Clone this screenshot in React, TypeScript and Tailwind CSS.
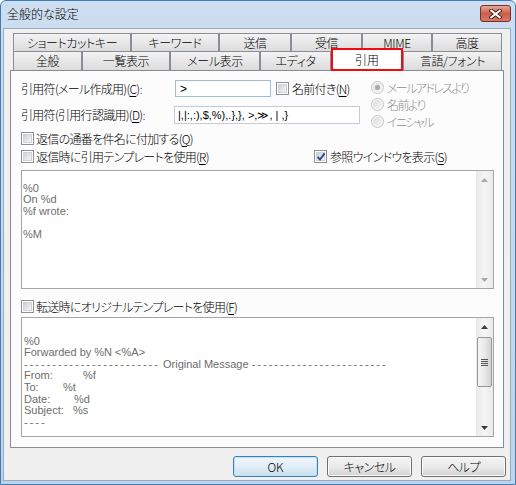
import React from "react";

const jp = "font-['Noto_Sans_CJK_JP',sans-serif] [font-feature-settings:'palt']";

function U({ children }: { children: React.ReactNode }) {
  return <span className="underline decoration-1 underline-offset-[2px]">{children}</span>;
}

function CheckBox({ checked = false }: { checked?: boolean }) {
  return (
    <span className="relative flex h-[13px] w-[13px] shrink-0 items-center justify-center border border-[#8e8f8f] bg-white">
      <span className="h-[9px] w-[9px] border border-[#d0d3d7] bg-gradient-to-br from-[#cdd1d6] to-[#f6f6f6]" />
      {checked && (
        <svg className="absolute left-[1px] top-[1px]" width="10" height="10" viewBox="0 0 10 10">
          <path d="M1.6 4.8 L4 7.6 L8.6 1.4" fill="none" stroke="#2f4787" strokeWidth="1.9" />
        </svg>
      )}
    </span>
  );
}

function Radio({ on = false }: { on?: boolean }) {
  return (
    <span className="flex h-[13px] w-[13px] shrink-0 items-center justify-center rounded-full border border-[#c4c4c4] bg-[#f8f8f8]">
      <span className="flex h-[9px] w-[9px] items-center justify-center rounded-full bg-gradient-to-br from-[#dcdcdc] to-[#f6f6f6]">
        {on && <span className="h-[5px] w-[5px] rounded-full bg-[#a8a8a8]" />}
      </span>
    </span>
  );
}

function Arrow({ up, color }: { up?: boolean; color: string }) {
  return (
    <svg width="7" height="4" viewBox="0 0 7 4">
      <polygon points={up ? "0,4 3.5,0 7,4" : "0,0 3.5,4 7,0"} fill={color} />
    </svg>
  );
}

function Dashes({ n }: { n: number }) {
  return <span className="tracking-[2px]">{"-".repeat(n)}</span>;
}

const backTabs: [string, number][] = [
  ["ショートカットキー", 118],
  ["キーワード", 88],
  ["送信", 72],
  ["受信", 71],
  ["MIME", 70],
  ["高度", 70],
];

const frontTabs: [string, number][] = [
  ["全般", 69],
  ["一覧表示", 88],
  ["メール表示", 90],
  ["エディタ", 71],
  ["引用", 72],
  ["言語/フォント", 99],
];

const tabBase =
  "flex shrink-0 items-center justify-center border border-[#8a8d94] bg-gradient-to-b from-[#f3f3f3] to-[#dcdcdc] text-[12px] leading-none tracking-[-0.4px] text-black";

const mono = "font-['Liberation_Sans',sans-serif] text-[11px] leading-[11.6px] tracking-normal text-[#6d6d6d]";

const quoteMarks = "|,|:,:),$,%),.},}, >,≫, | ,}";

const btn =
  "flex h-[21px] w-[85px] items-center justify-center rounded-[3px] border text-[12px] leading-none text-black";

export default function App() {
  return (
    <div className={`${jp} flex h-[485px] w-[516px] flex-col rounded-t-[6px] border border-[#3d7fb5] bg-gradient-to-b from-[#cddef0] to-[#bfd3ea] font-light`}>
      {/* title bar */}
      <div className="flex h-[27px] shrink-0 items-start justify-between">
        <div className="pl-[6px] pt-[7px] text-[12px] leading-none text-black">全般的な設定</div>
        <div className="mr-[4px] mt-[4px] flex h-[17px] w-[31px] items-center justify-center rounded-[3px] border border-[#7a2e25] bg-gradient-to-b from-[#e6a899] via-[#c95e4a] to-[#d87a64]">
          <svg width="13" height="10" viewBox="0 0 13 10">
            <path d="M2.2 1.6 L10.8 8.4 M10.8 1.6 L2.2 8.4" stroke="#3d1610" strokeWidth="3.8" strokeLinecap="square" />
            <path d="M2.2 1.6 L10.8 8.4 M10.8 1.6 L2.2 8.4" stroke="#ffffff" strokeWidth="2" strokeLinecap="square" />
          </svg>
        </div>
      </div>

      {/* client area */}
      <div className="ml-[2px] mr-[4px] flex h-[453px] flex-col border border-[#97abc1] bg-[#f0f0f0] pt-[4px]">
        {/* tabs */}
        <div className="ml-[9px] flex flex-col">
          <div className="flex h-[19px]">
            {backTabs.map(([label, w]) => (
              <div key={label} className={tabBase} style={{ width: w }}>
                {label}
              </div>
            ))}
          </div>
          <div className="relative -mt-px flex h-[19px] items-end">
            {frontTabs.map(([label, w]) =>
              label === "引用" ? (
                <div
                  key={label}
                  className="relative z-10 -mb-px flex h-[23px] shrink-0 items-center justify-center border-2 border-[#f00c0c] bg-white text-[12px] leading-none text-black"
                  style={{ width: w }}
                >
                  {label}
                </div>
              ) : (
                <div key={label} className={`${tabBase} h-[19px] border-b-0`} style={{ width: w }}>
                  {label}
                </div>
              )
            )}
          </div>
        </div>

        {/* panel */}
        <div className="mx-[6px] flex flex-col border border-[#898c95] bg-[#fcfcfc] pb-[10px] pl-[10px] pr-[9px] pt-[9px] text-[12px] leading-none tracking-[-0.7px] text-black">
          <div className="flex h-[51px]">
            <div className="flex w-[350px] flex-col">
              <div className="flex h-[17px] items-center">
                <span className="w-[154px] shrink-0">
                  引用符(メール作成用)(<U>C</U>):
                </span>
                <div className="flex h-[17px] w-[96px] items-center border border-[#9fbcd9] bg-white pl-[4px] font-['Liberation_Sans',sans-serif] text-[12px]">
                  &gt;
                </div>
                <span className="ml-[5px] flex items-center gap-[3px]">
                  <CheckBox />
                  <span>
                    名前付き(<U>N</U>)
                  </span>
                </span>
              </div>
              <div className="mt-[9px] flex h-[18px] items-center">
                <span className="w-[153px] shrink-0">
                  引用符(引用行認識用)(<U>D</U>):
                </span>
                <div className="flex h-[18px] w-[186px] items-center whitespace-pre border border-[#c3ccd8] bg-white pl-[3px] font-['Liberation_Sans',sans-serif] text-[11px] tracking-normal">
                  {quoteMarks}
                </div>
              </div>
            </div>
            <div className="-mt-px flex flex-col text-[#8d8d8d]">
              {[
                ["メールアドレスより", true],
                ["名前より", false],
                ["イニシャル", false],
              ].map(([label, on]) => (
                <div key={label as string} className="flex h-[17px] items-center gap-[3px]">
                  <Radio on={on as boolean} />
                  <span className="tracking-[-1.6px]">{label as string}</span>
                </div>
              ))}
            </div>
          </div>

          <div className="flex h-[15px] items-center gap-[2px]">
            <CheckBox />
            <span>
              返信の通番を件名に付加する(<U>Q</U>)
            </span>
          </div>

          <div className="mt-[3px] flex h-[15px] items-center">
            <div className="flex w-[293px] items-center gap-[2px]">
              <CheckBox />
              <span>
                返信時に引用テンプレートを使用(<U>R</U>)
              </span>
            </div>
            <div className="flex items-center gap-[3px]">
              <CheckBox checked />
              <span>
                参照ウインドウを表示(<U>S</U>)
              </span>
            </div>
          </div>

          {/* reply template */}
          <div className="mt-[6px] flex h-[119px] border border-[#a5a5a5] bg-white">
            <div className={`${mono} flex-1 whitespace-pre pl-[1px]`}>
              <div>&nbsp;</div>
              <div>%0</div>
              <div>On %d</div>
              <div>%f wrote:</div>
              <div>&nbsp;</div>
              <div>%M</div>
            </div>
            <div className="flex w-[17px] flex-col bg-gradient-to-r from-[#e9e9e9] via-[#f5f5f5] to-[#eaeaea]">
              <div className="flex h-[17px] items-center justify-center">
                <Arrow up color="#a8a8a8" />
              </div>
              <div className="flex-1" />
              <div className="flex h-[17px] items-center justify-center">
                <Arrow color="#a8a8a8" />
              </div>
            </div>
          </div>

          <div className="mt-[10px] flex h-[15px] items-center gap-[2px]">
            <CheckBox />
            <span>
              転送時にオリジナルテンプレートを使用(<U>F</U>)
            </span>
          </div>

          {/* forward template */}
          <div className="mt-[3px] flex h-[120px] overflow-hidden border border-[#a5a5a5] bg-white">
            <div className={`${mono} flex-1 whitespace-pre pl-[2px] pt-[6px]`}>
              <div>&nbsp;</div>
              <div>%0</div>
              <div>Forwarded by %N &lt;%A&gt;</div>
              <div>
                <Dashes n={24} /> Original Message <Dashes n={24} />
              </div>
              <div className="flex">
                <span className="inline-block w-[59px]">From:</span>%f
              </div>
              <div className="flex">
                <span className="inline-block w-[39px]">To:</span>%t
              </div>
              <div className="flex">
                <span className="inline-block w-[50px]">Date:</span>%d
              </div>
              <div className="flex">
                <span className="inline-block w-[49px]">Subject:</span>%s
              </div>
              <div>
                <Dashes n={4} />
              </div>
            </div>
            <div className="flex w-[17px] flex-col bg-gradient-to-r from-[#e9e9e9] via-[#f5f5f5] to-[#eaeaea]">
              <div className="flex h-[17px] items-center justify-center">
                <Arrow up color="#3c3c3c" />
              </div>
              <div className="mx-auto mt-[2px] flex h-[50px] w-[15px] flex-col items-center justify-center gap-[1px] rounded-[2px] border border-[#979797] bg-gradient-to-r from-[#f6f6f6] via-[#e9e9e9] to-[#d3d3d3]">
                <span className="h-px w-[7px] bg-[#555]" />
                <span className="h-px w-[7px] bg-[#555]" />
                <span className="h-px w-[7px] bg-[#555]" />
                <span className="h-px w-[7px] bg-[#555]" />
              </div>
              <div className="flex-1" />
              <div className="flex h-[17px] items-center justify-center">
                <Arrow color="#3c3c3c" />
              </div>
            </div>
          </div>
        </div>

        {/* buttons */}
        <div className="mt-[8px] flex justify-end gap-[9px] pr-[4px]">
          <button className={`${btn} border-[#3c7fb1] bg-gradient-to-b from-[#eef6fb] via-[#e2eef6] to-[#c9dfed] shadow-[inset_0_0_0_1px_#bfe3f8]`}>
            OK
          </button>
          <button className={`${btn} border-[#707070] bg-gradient-to-b from-[#f2f2f2] via-[#ebebeb] to-[#d2d2d2] tracking-[-0.5px] shadow-[inset_0_0_0_1px_#fcfcfc]`}>
            キャンセル
          </button>
          <button className={`${btn} border-[#707070] bg-gradient-to-b from-[#f2f2f2] via-[#ebebeb] to-[#d2d2d2] tracking-[-0.5px] shadow-[inset_0_0_0_1px_#fcfcfc]`}>
            ヘルプ
          </button>
        </div>
      </div>
    </div>
  );
}
